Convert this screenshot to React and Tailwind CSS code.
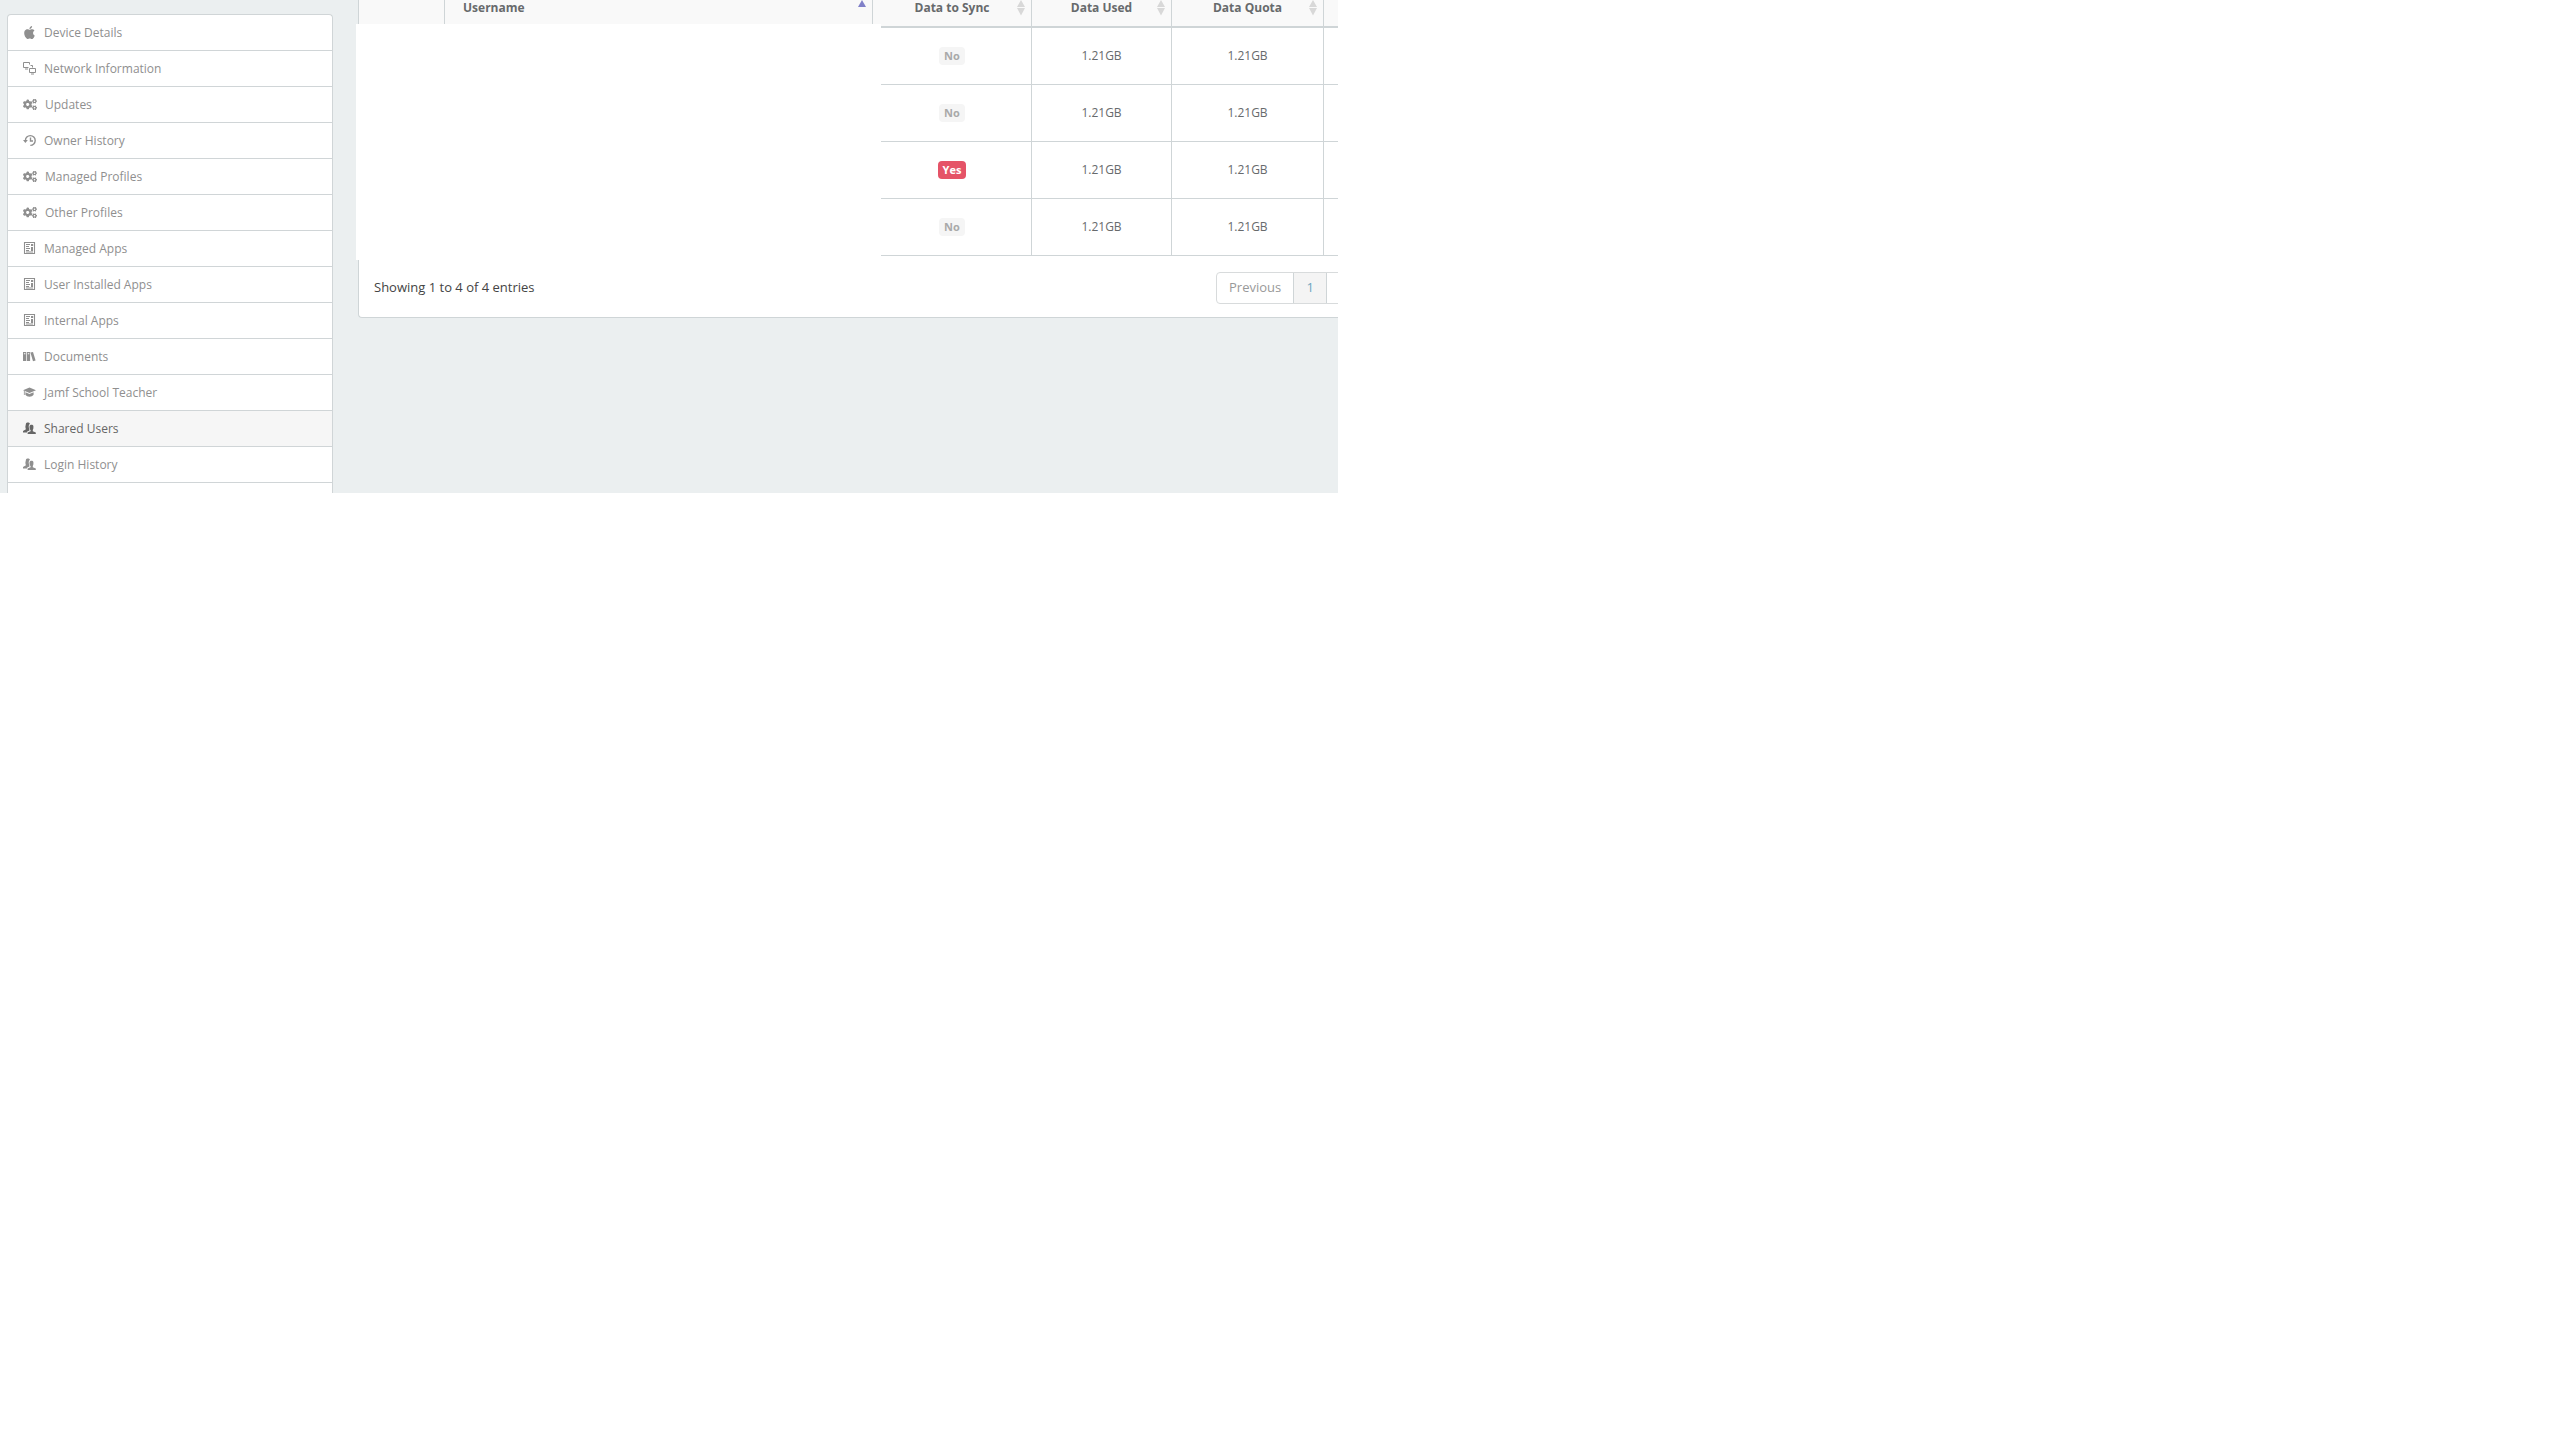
import React from 'react';
import { ImAppleinc } from 'react-icons/im';
import { FaCogs } from 'react-icons/fa';

const NetworkIcon = ({ className }) => (
    <svg className={className} viewBox="0 0 13 13" fill="none" stroke="currentColor" strokeWidth="1">
        <path d="M5.5 5.5H0.5V0.5H6.5V2.5M2 7H5M7.5 3.5H9.5V5.5M6.5 6.5H12.5V10.5H6.5ZM8 12H11" />
    </svg>
);

const HistoryIcon = ({ className }) => (
    <svg className={className} viewBox="0 0 13 13" fill="none" stroke="currentColor" strokeWidth="1.4">
        <path d="M2.4 6.5A4.9 4.9 0 1 1 7.3 11.4M7.5 3.5V7H10" />
        <path d="M0 6H4.8L2.4 9Z" fill="currentColor" stroke="none" />
    </svg>
);

const NewsIcon = ({ className }) => (
    <svg className={className} viewBox="0 0 13 13" fill="none" stroke="currentColor" strokeWidth="1.1">
        <path d="M1.5 0.5H11.5V11.5H1.5ZM3 2.5H7M3 4.5H6M3 6.5H7M3 8.5H6M3 10H10" />
        <path d="M8 2H10.2V4H8ZM8 5H10V9H8Z" fill="currentColor" stroke="none" />
    </svg>
);

const BooksIcon = ({ className }) => (
    <svg className={className} viewBox="0 0 13 13" fill="currentColor">
        <path fillRule="evenodd" d="M0 2H3.2V11H0ZM.9 3.3V4.2H2.4V3.3ZM3.9 2H7.1V11H3.9ZM4.8 3.3V4.2H6.3V3.3ZM7.4 2.6L10 2L12.6 10.4L10 11.2Z" />
    </svg>
);

const GraduationIcon = ({ className }) => (
    <svg className={className} viewBox="0 0 13 13" fill="currentColor">
        <path d="M6.5 1.5L13 4.3L6.5 7L0 4.3ZM2.4 6.2L6.5 8L10.6 6.2V8.8C9 11.4 4 11.4 2.4 8.8Z" />
        <path d="M1.4 5V9" stroke="currentColor" strokeWidth="0.8" />
    </svg>
);

const UserGroupIcon = ({ className }) => (
    <svg className={className} viewBox="0 0 13 13" fill="currentColor">
        <path d="M3 1.5C3.4 .2 6.2 0 7 1.6C5.8 2.6 5.4 4.6 6 6.2L6.4 7.4V8.4L4 9.8V10.4H0V9L2.6 7.6C3.4 7 2.2 6 2.4 4.4Z" />
        <path d="M6.6 4C7 2.2 10 2.2 10.4 4V6C10.4 7 9.8 7.4 9.8 8.2V9.2L12.8 10.4V12H4.6V10.6L7.6 9.2V8.2C6.8 7.2 6.2 6 6.6 4Z" />
    </svg>
);

const menu = [
    { label: 'Device Details', icon: ImAppleinc },
    { label: 'Network Information', icon: NetworkIcon },
    { label: 'Updates', icon: FaCogs, wide: true },
    { label: 'Owner History', icon: HistoryIcon },
    { label: 'Managed Profiles', icon: FaCogs, wide: true },
    { label: 'Other Profiles', icon: FaCogs, wide: true },
    { label: 'Managed Apps', icon: NewsIcon },
    { label: 'User Installed Apps', icon: NewsIcon },
    { label: 'Internal Apps', icon: NewsIcon },
    { label: 'Documents', icon: BooksIcon },
    { label: 'Jamf School Teacher', icon: GraduationIcon },
    { label: 'Shared Users', icon: UserGroupIcon, active: true },
    { label: 'Login History', icon: UserGroupIcon },
];

const rows = [
    { id: 1, sync: false, used: '1.21GB', quota: '1.21GB' },
    { id: 2, sync: false, used: '1.21GB', quota: '1.21GB' },
    { id: 3, sync: true, used: '1.21GB', quota: '1.21GB' },
    { id: 4, sync: false, used: '1.21GB', quota: '1.21GB' },
];

function SortIcon() {
    return (
        <svg className="absolute top-0 right-1.5 w-2 h-4 text-[#d8d8d8]" viewBox="0 0 8 16" fill="currentColor">
            <path d="M4 0L8 7H0ZM0 8H8L4 15.5Z" />
        </svg>
    );
}

function SortableHeader({ children }) {
    return (
        <th className="relative border-r border-b-2 border-[#cfd5d7] p-0 pb-2.5 align-bottom">
            <button className="w-full text-center font-bold leading-4">
                {children}
                <SortIcon />
            </button>
        </th>
    );
}

export default function App() {
    return (
        <div className="flex max-w-[1338px] max-h-[493px] overflow-hidden bg-[#ebeff0] font-['Open_Sans',sans-serif] text-xs text-[#676a6c]">
            <nav className="w-[326px] shrink-0 ml-[7px] mt-3.5 border border-b-0 border-[#d0d5d7] rounded-t bg-white overflow-hidden">
                {menu.map(({ label, icon: Icon, active, wide }) => (
                    <a
                        key={label}
                        href="#"
                        className={`flex items-center gap-2 h-9 pl-[15px] border-b border-[#d0d5d7] ${active ? 'bg-[#f6f6f6] text-[#666666]' : 'text-[#8f8f8f]'}`}
                    >
                        <Icon className={`${wide ? 'w-3.5' : 'w-[13px]'} h-[13px] shrink-0`} />
                        {label}
                    </a>
                ))}
                <div className="h-9" />
            </nav>

            <main className="relative flex-1 min-w-0 ml-[25px]">
                <section className="w-[1100px] border-l border-b border-[#cfd5d7] rounded-bl bg-white">
                    <table className="w-full table-fixed border-separate border-spacing-0">
                        <colgroup>
                            <col className="w-[86px]" />
                            <col className="w-[428px]" />
                            <col className="w-[159px]" />
                            <col className="w-[140px]" />
                            <col className="w-[152px]" />
                            <col />
                        </colgroup>
                        <thead className="bg-[#f9f9f9]">
                            <tr>
                                <th className="border-r border-b-2 border-[#cfd5d7]" />
                                <th className="relative border-r border-b-2 border-[#cfd5d7] p-0 pb-2.5 pl-[18px]">
                                    <button className="block w-full text-left font-bold leading-4">
                                        Username
                                        <svg className="absolute top-0 right-1.5 w-2 h-[7px] text-[#8080c8]" viewBox="0 0 8 7" fill="currentColor">
                                            <path d="M4 0L8 7H0Z" />
                                        </svg>
                                    </button>
                                </th>
                                <SortableHeader>Data to Sync</SortableHeader>
                                <SortableHeader>Data Used</SortableHeader>
                                <SortableHeader>Data Quota</SortableHeader>
                                <th className="border-b-2 border-[#cfd5d7]" />
                            </tr>
                        </thead>
                        <tbody>
                            {rows.map((row) => (
                                <tr key={row.id} className="h-[57px] text-center [&>td]:border-b [&>td]:border-[#cfd5d7] [&>td]:p-0">
                                    <td className="border-r" />
                                    <td className="border-r" />
                                    <td className="border-r">
                                        <span className={`inline-block px-[5px] rounded-sm text-[11px] font-bold leading-[18px] ${row.sync ? 'bg-[#e55367] text-white' : 'bg-[#f5f5f5] text-[#a9a9a9]'}`}>
                                            {row.sync ? 'Yes' : 'No'}
                                        </span>
                                    </td>
                                    <td className="border-r">{row.used}</td>
                                    <td className="border-r">{row.quota}</td>
                                    <td />
                                </tr>
                            ))}
                        </tbody>
                    </table>
                    <div className="flex items-center h-[61px] pt-[3px] pl-[15px] text-[13px]">
                        <p className="w-[842px] text-[#444444]">Showing 1 to 4 of 4 entries</p>
                        <div className="flex h-8 border border-[#d8dbdc] rounded text-[#999999]">
                            <button className="px-3">Previous</button>
                            <button className="w-[34px] border-x border-[#cfd5d7] bg-[#f4f4f4] text-[#6fa5bf]">1</button>
                            <button className="w-14" aria-label="Next" />
                        </div>
                    </div>
                </section>
                {/* covers the private columns */}
                <div className="absolute -left-0.5 top-6 w-[525px] h-[236px] bg-white" />
            </main>
        </div>
    );
}
